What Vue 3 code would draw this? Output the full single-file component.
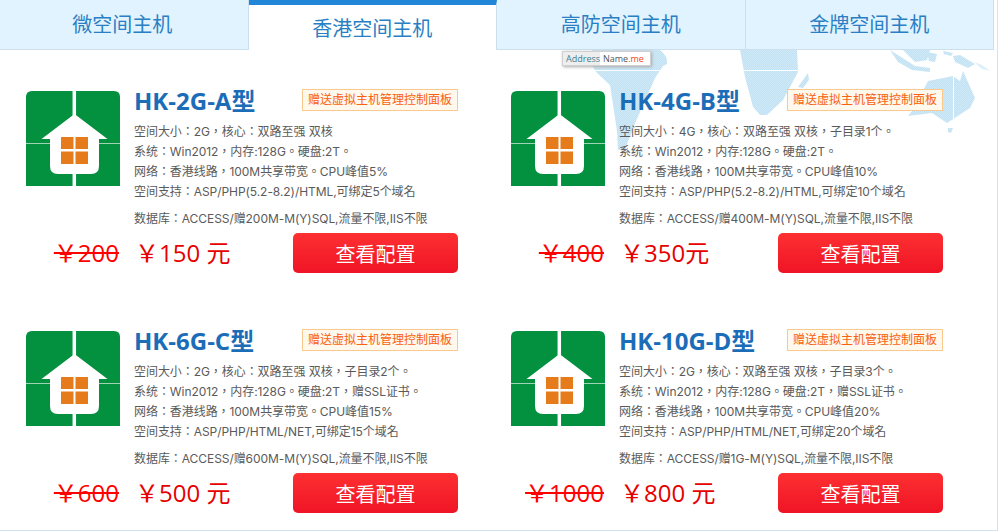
<template>
  <div class="page">
    <div class="tabs">
      <div v-for="(t, i) in tabs" :key="t" class="tab" :class="{ active: i === 1 }">{{ t }}</div>
    </div>
    <div class="panel">
      <svg class="worldmap" width="408" height="120" viewBox="0 0 408 120">
        <defs>
          <pattern id="dots" width="2" height="2" patternUnits="userSpaceOnUse">
            <rect width="2" height="2" fill="#c2e2f3" />
            <rect width="1" height="1" fill="#cfe9f7" />
            <rect x="1" y="1" width="1" height="1" fill="#cfe9f7" />
          </pattern>
        </defs>
        <g fill="url(#dots)">
          <path d="M2 0 L70 0 Q78 6 77 14 L73 16 L65 28 L53 55 L43 78 L35 100 L28 100 L27 81 L20 35 L5 21 L0 8Z" />
          <path d="M150 0 H207 L208 22 L193 50 L177 65 H170 L163 57 L155 27Z" />
          <path d="M218 23 L208 37 L213 38 L219 30Z" />
          <path d="M363 26 L338 31 L323 60 L318 66 L342 63 L357 73 L380 58 L385 48 L373 21 L370 31Z" />
          <path d="M358 78 L363 78 L361 83 L358 82Z" />
          <path d="M300 0 L325 16 L340 18 L340 22 L322 20 L308 12Z" />
          <path d="M313 0 H340 L337 10 L325 12Z" />
          <path d="M337 2 L347 4 L345 12 L339 11Z" />
          <path d="M353 1 L363 3 L361 6 L354 4Z" />
          <path d="M363 6 L370 5 L385 14 L378 18 L365 12Z" />
          <path d="M384 12 L392 15 L400 21 L392 19Z" opacity="0.6" />
        </g>
        <path d="M0 20.500 H220" stroke="#fff" stroke-width="1" />
        <path d="M363.500 25 V85" stroke="#fff" stroke-width="1" />
      </svg>
      <div class="address"><span class="addr-left">Address</span><span class="addr-right">Name<em>.me</em></span></div>
      <div class="grid">
        <div v-for="p in plans" :key="p.name" class="card">
          <svg class="icon" width="94" height="95" viewBox="0 0 94 95">
            <path d="M6 0 H88 Q94 0 94 6 V95 H0 V6 Q0 0 6 0Z" fill="#03913f" />
            <path d="M0 52.500 H94" stroke="#9fd3b3" stroke-width="1" />
            <path d="M48.300 0 V95" stroke="#fff" stroke-width="3.500" />
            <path d="M48.500 23 L81.500 48 H73 V75 Q73 83 65 83 H32 Q24 83 24 75 V48 H15.500Z" fill="#fff" />
            <path d="M35 46 H47.500 V58 H35Z M49.500 46 H62 V58 H49.500Z M35 60.500 H47.500 V73 H35Z M49.500 60.500 H62 V73 H49.500Z" fill="#e67b1b" />
          </svg>
          <div class="info">
            <div class="head">
              <h3>{{ p.name }}</h3>
              <span class="badge">赠送虚拟主机管理控制面板</span>
            </div>
            <p v-for="l in p.lines" :key="l">{{ l }}</p>
            <p class="db">{{ p.db }}</p>
          </div>
          <div class="foot">
            <div class="prices">
              <div class="old-wrap"><s class="old">￥{{ p.old }}</s></div>
              <span class="now">￥{{ p.now }}</span>
            </div>
            <button class="view">查看配置</button>
          </div>
        </div>
      </div>
    </div>
  </div>
</template>

<script setup>
const tabs = ["微空间主机", "香港空间主机", "高防空间主机", "金牌空间主机"]

const plans = [
  {
    name: "HK-2G-A型",
    lines: [
      "空间大小：2G，核心：双路至强 双核",
      "系统：Win2012，内存:128G。硬盘:2T。",
      "网络：香港线路，100M共享带宽。CPU峰值5%",
      "空间支持：ASP/PHP(5.2-8.2)/HTML,可绑定5个域名",
    ],
    db: "数据库：ACCESS/赠200M-M(Y)SQL,流量不限,IIS不限",
    old: "200",
    now: "150 元",
  },
  {
    name: "HK-4G-B型",
    lines: [
      "空间大小：4G，核心：双路至强 双核，子目录1个。",
      "系统：Win2012，内存:128G。硬盘:2T。",
      "网络：香港线路，100M共享带宽。CPU峰值10%",
      "空间支持：ASP/PHP(5.2-8.2)/HTML,可绑定10个域名",
    ],
    db: "数据库：ACCESS/赠400M-M(Y)SQL,流量不限,IIS不限",
    old: "400",
    now: "350元",
  },
  {
    name: "HK-6G-C型",
    lines: [
      "空间大小：2G，核心：双路至强 双核，子目录2个。",
      "系统：Win2012，内存:128G。硬盘:2T，赠SSL证书。",
      "网络：香港线路，100M共享带宽。CPU峰值15%",
      "空间支持：ASP/PHP/HTML/NET,可绑定15个域名",
    ],
    db: "数据库：ACCESS/赠600M-M(Y)SQL,流量不限,IIS不限",
    old: "600",
    now: "500 元",
  },
  {
    name: "HK-10G-D型",
    lines: [
      "空间大小：2G，核心：双路至强 双核，子目录3个。",
      "系统：Win2012，内存:128G。硬盘:2T，赠SSL证书。",
      "网络：香港线路，100M共享带宽。CPU峰值20%",
      "空间支持：ASP/PHP/HTML/NET,可绑定20个域名",
    ],
    db: "数据库：ACCESS/赠1G-M(Y)SQL,流量不限,IIS不限",
    old: "1000",
    now: "800 元",
  },
]
</script>

<style scoped>
.page {
  width: 998px;
  height: 531px;
  box-sizing: border-box;
  border-right: 1px solid #d3e3f0;
  border-bottom: 1px solid #d3e3f0;
  font-family: "Open Sans", "Noto Sans CJK SC", sans-serif;
  overflow: hidden;
}

.tabs {
  display: flex;
  width: 994px;
  height: 50px;
}

.tab {
  flex: 1;
  box-sizing: border-box;
  height: 50px;
  background: #e1f3fe;
  border-right: 1px solid #cbdfee;
  border-bottom: 1px solid #cbdfee;
  color: #2a7fc4;
  font-size: 20px;
  line-height: 49px;
  text-align: center;
}

.tab:first-child {
  text-indent: -3px;
}

.tab.active {
  background: #fff;
  border-top: 5px solid #2185d8;
  border-bottom: 0;
  line-height: 47px;
}

.panel {
  position: relative;
  height: 480px;
}

.worldmap {
  position: absolute;
  left: 590px;
  top: 0;
}

.address {
  position: absolute;
  left: 562px;
  top: 1px;
  display: flex;
  box-sizing: border-box;
  width: 89px;
  height: 15px;
  background: #eee;
  border: 1px solid #d0d0d0;
  box-shadow: 1px 1px 3px #aaa;
  font-size: 9px;
  line-height: 13px;
}

.addr-left {
  box-sizing: border-box;
  width: 37px;
  padding-left: 3px;
  color: #3f7d91;
}

.addr-right {
  background: #fff;
  padding-left: 3px;
  flex: 1;
  color: #555;
}

.addr-right em {
  font-style: normal;
  color: #f04a10;
}

.grid {
  position: relative;
  display: grid;
  grid-template-columns: 485px 485px;
  grid-auto-rows: 240px;
  padding: 41px 0 0 26px;
}

.card {
  display: grid;
  grid-template-columns: 94px 324px;
  column-gap: 14px;
  align-content: start;
}

.icon {
  display: block;
}

.info {
  min-width: 0;
}

.head {
  display: flex;
  justify-content: space-between;
  align-items: flex-start;
  height: 31px;
  margin-top: -2px;
  margin-bottom: 2px;
}

h3 {
  margin: 0;
  font-size: 24px;
  font-weight: 700;
  line-height: 24px;
  color: #1c6db8;
}

.badge {
  width: 156px;
  height: 22px;
  box-sizing: border-box;
  background: #fff8ec;
  border: 1px solid #fbc98e;
  color: #f9600f;
  font-size: 12px;
  line-height: 20px;
  text-align: center;
}

p {
  margin: 0;
  font-family: Inter, "Noto Sans CJK TC", sans-serif;
  font-size: 12px;
  letter-spacing: -0.06px;
  line-height: 20px;
  color: #5a5a5a;
  white-space: nowrap;
}

p.db {
  margin-top: 7px;
}

.foot {
  grid-column: 1 / 3;
  display: flex;
  justify-content: space-between;
  align-items: center;
  margin-top: 4px;
  height: 40px;
}

.prices {
  display: flex;
  padding-bottom: 4px;
  font-size: 24px;
  color: #e60000;
  white-space: nowrap;
}

.old-wrap {
  display: flex;
  justify-content: flex-end;
  width: 93px;
  margin-right: 16px;
}

.old {
  color: #f00;
}

.view {
  width: 165px;
  height: 40px;
  border: 0;
  border-radius: 5px;
  background: linear-gradient(#fd3032, #ef1425);
  color: #fff;
  font-family: inherit;
  font-size: 20px;
}
</style>
